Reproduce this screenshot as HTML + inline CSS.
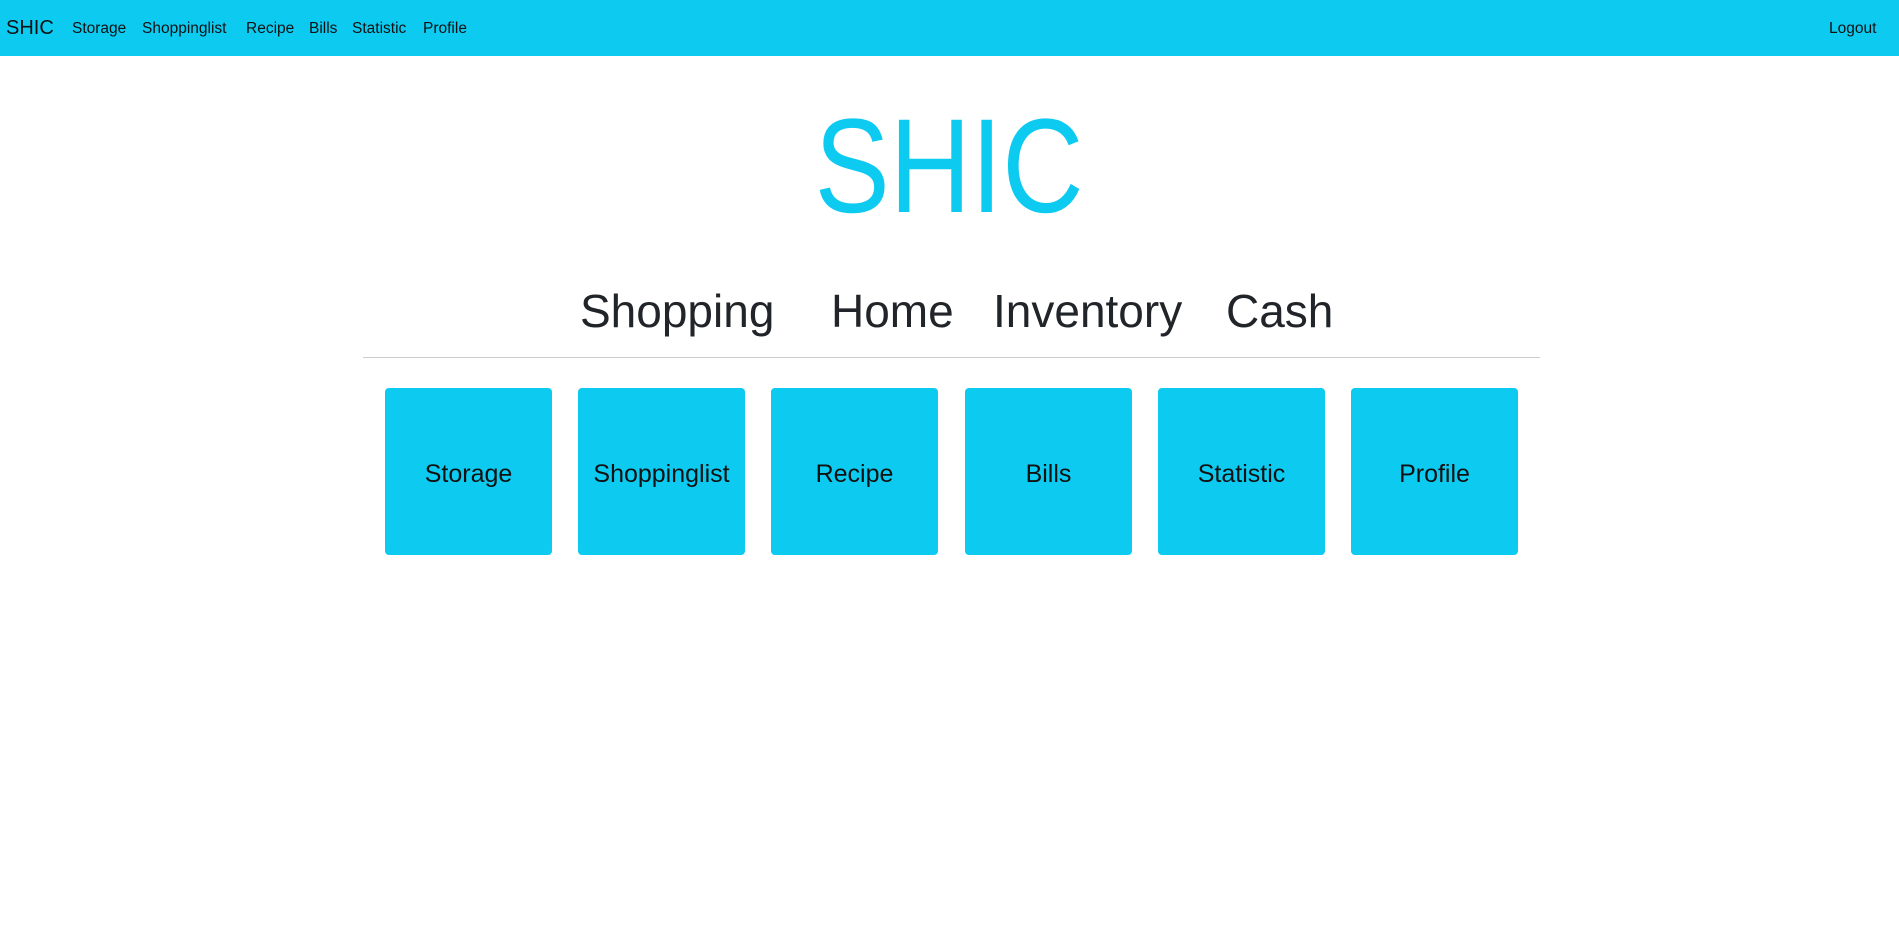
<!DOCTYPE html>
<html><head><style>
body{margin:0;width:1899px;height:927px;background:#fff;font-family:"Liberation Sans",sans-serif;position:relative;overflow:hidden}
.nav{position:absolute;left:0;top:0;width:1899px;height:56px;background:#0dcaf0}
.nav span{position:absolute;top:20px;font-size:15.5px;color:#111}
.brand{font-size:20px!important;top:17px!important}
.big{position:absolute;left:0;width:1899px;top:100px;text-align:center;font-size:134px;color:#0dcaf0;line-height:1}
.big span{display:inline-block;transform:scaleX(.84)}
.sub{position:absolute;top:288px;font-size:46px;color:#212529;line-height:1}
.hr{position:absolute;left:363px;top:357px;width:1177px;height:1px;background:#ccc}
.box{position:absolute;top:388px;width:167px;height:167px;background:#0dcaf0;border-radius:4px;display:flex;align-items:center;justify-content:center;font-size:25px;color:#111;box-sizing:border-box;padding-top:6px}
</style></head><body>
<div class="nav">
<span class="brand" style="left:6px">SHIC</span>
<span style="left:72px">Storage</span>
<span style="left:142px">Shoppinglist</span>
<span style="left:246px">Recipe</span>
<span style="left:309px">Bills</span>
<span style="left:352px">Statistic</span>
<span style="left:423px">Profile</span>
<span style="left:1829px">Logout</span>
</div>
<div class="big"><span>SHIC</span></div>
<div class="sub" style="left:580px">Shopping</div>
<div class="sub" style="left:831px">Home</div>
<div class="sub" style="left:993px">Inventory</div>
<div class="sub" style="left:1226px">Cash</div>
<div class="hr"></div>
<div class="box" style="left:385px">Storage</div>
<div class="box" style="left:578px">Shoppinglist</div>
<div class="box" style="left:771px">Recipe</div>
<div class="box" style="left:965px">Bills</div>
<div class="box" style="left:1158px">Statistic</div>
<div class="box" style="left:1351px">Profile</div>
</body></html>
